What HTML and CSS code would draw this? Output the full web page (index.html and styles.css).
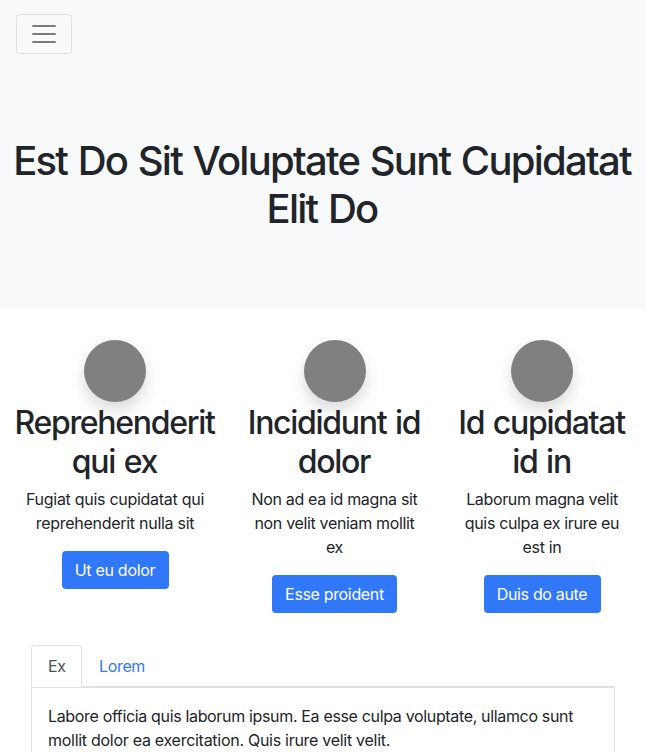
FILE: index.html
```
<!DOCTYPE html>
<html lang="en">
<head>
<meta charset="utf-8">
<title>Landing</title>
<link rel="stylesheet" href="styles.css">
</head>
<body>
<nav class="navbar">
  <button class="toggler" type="button" aria-label="Menu">
    <svg width="30" height="30" viewBox="0 0 30 30"><path d="M4 7h22M4 15h22M4 23h22" stroke="rgba(0,0,0,.5)" stroke-width="2" stroke-linecap="round" stroke-miterlimit="10"/></svg>
  </button>
</nav>
<header class="hero">
  <h1>Est Do Sit Voluptate Sunt Cupidatat<br>Elit Do</h1>
</header>
<section class="features">
  <div class="feature f1">
    <div class="avatar"></div>
    <h2>Reprehenderit<br>qui ex</h2>
    <p class="wide">Fugiat quis cupidatat qui<br>reprehenderit nulla sit</p>
    <a class="btn wide">Ut eu dolor</a>
  </div>
  <div class="feature f2">
    <div class="avatar"></div>
    <h2>Incididunt id<br>dolor</h2>
    <p>Non ad ea id magna sit<br>non velit veniam mollit<br>ex</p>
    <a class="btn">Esse proident</a>
  </div>
  <div class="feature f3">
    <div class="avatar"></div>
    <h2>Id cupidatat<br>id in</h2>
    <p>Laborum magna velit<br>quis culpa ex irure eu<br>est in</p>
    <a class="btn">Duis do aute</a>
  </div>
</section>
<section class="tabs">
  <div class="tab-list">
    <a class="tab active">Ex</a>
    <a class="tab">Lorem</a>
  </div>
  <div class="panel">Labore officia quis laborum ipsum. Ea esse culpa voluptate, ullamco sunt<br><span class="wide">mollit dolor ea exercitation. Quis irure velit velit.</span></div>
</section>
</body>
</html>
```
FILE: styles.css
```
* { box-sizing: border-box; }
html { overflow: hidden; }
body {
  margin: 0;
  height: 752px;
  overflow: hidden;
  font: 400 16px/24px Inter, "Liberation Sans", sans-serif;
  letter-spacing: -0.34px;
  color: #212529;
  background: #fff;
  white-space: nowrap;
}
.navbar { height: 68px; padding: 14px 16px; background: #f8f9fa; }
.toggler {
  display: flex;
  align-items: center;
  justify-content: center;
  width: 56px;
  height: 40px;
  padding: 0;
  border: 1px solid rgba(0, 0, 0, .1);
  border-radius: 4px;
  background: transparent;
}
.toggler svg { fill: none; }
.hero { height: 240px; padding: 69px 2px 0 0; background: #f8f9fa; text-align: center; }
h1 { margin: 0; font-size: 40px; line-height: 48px; font-weight: 550; letter-spacing: -1.75px; word-spacing: 1.6px; }
.features { display: flex; height: 337px; padding-top: 32px; text-align: center; }
.feature { display: flex; flex-direction: column; align-items: center; }
.f1 { width: 230px; }
.f2 { width: 209px; }
.f3 { width: 207px; padding-right: 1px; }
.avatar {
  width: 62px;
  height: 62px;
  border-radius: 50%;
  background: #808080;
  box-shadow: 0 8px 16px rgba(0, 0, 0, .15);
}
h2 { margin: 1px 1px 6px 0; font-size: 32px; line-height: 39px; font-weight: 550; letter-spacing: -1.3px; word-spacing: 1.5px; }
p { margin: 0 0 16px; }
.wide { letter-spacing: -0.28px; }
.btn {
  height: 38px;
  padding: 7px 13px;
  border-radius: 4px;
  background: #3178f9;
  color: #fff;
}
.f1 .btn { width: 107px; }
.f3 .btn { width: 117px; }
.tabs { margin: 0 31px; }
.tab-list { display: flex; height: 42px; border-bottom: 1px solid #dee2e6; }
.tab { height: 42px; padding: 9px 17px; color: #3178f9; }
.active {
  width: 51px;
  padding: 8px 16px;
  border: 1px solid #dee2e6;
  border-bottom-color: #fff;
  border-radius: 4px 4px 0 0;
  background: #fff;
  color: #495057;
}
.panel { height: 100px; padding: 16px; border: 1px solid #dee2e6; }
```
